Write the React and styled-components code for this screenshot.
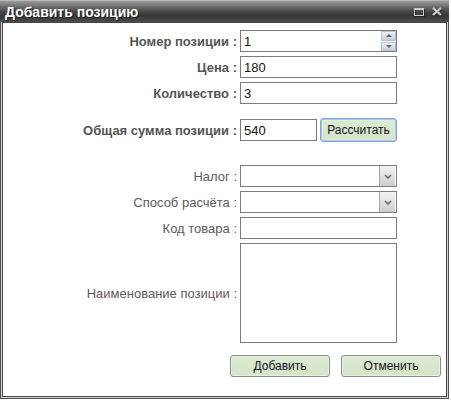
import React from "react";
import styled, { createGlobalStyle } from "styled-components";

const Global = createGlobalStyle`
  html, body { margin: 0; padding: 0; background: #ffffff; }
  * { box-sizing: border-box; }
`;

const Window = styled.div`
  width: 449px;
  height: 399px;
  display: flex;
  flex-direction: column;
  background: #d4d4d4;
  border: 1px solid #4f4f4f;
  border-top: none;
  font-family: "Liberation Sans", Arial, sans-serif;
`;

const TitleBar = styled.div`
  height: 22px;
  margin: 0 -1px;
  display: flex;
  align-items: center;
  justify-content: space-between;
  padding: 0 5px 0 5px;
  border-top: 1px solid #b8b8b8;
  background: linear-gradient(
    to bottom,
    #999999 0%,
    #727272 25%,
    #474747 50%,
    #363636 70%,
    #4c4c4c 100%
  );
`;

const Title = styled.div`
  color: #ffffff;
  font-weight: bold;
  font-size: 14px;
  text-shadow: 1px 1px 0 #1e1e1e;
  margin-top: 1px;
`;

const Controls = styled.div`
  display: flex;
  align-items: center;
  gap: 7px;
  padding-right: 1px;
  margin-top: 1px;
`;

const Frame = styled.div`
  flex: 1;
  display: flex;
  padding: 0 1px 1px 1px;
`;

const Body = styled.div`
  flex: 1;
  background: #ffffff;
  border: 1px solid #474747;
  display: flex;
  flex-direction: column;
  padding-top: 7px;
`;

const Row = styled.div`
  display: grid;
  grid-template-columns: 234px 157px;
  column-gap: 3px;
  align-items: center;
  margin-top: ${(p) => p.$mt || 0}px;
`;

const Label = styled.div`
  text-align: right;
  font-size: 13px;
  font-weight: ${(p) => (p.$bold ? "bold" : "normal")};
  color: ${(p) => (p.$bold ? "#545454" : "#5e5956")};
  white-space: nowrap;
`;

const TextInput = styled.div`
  height: 22px;
  width: ${(p) => (p.$w ? `${p.$w}px` : "100%")};
  border: 1px solid #7c7c7c;
  background: #fff;
  font-size: 13px;
  color: #111;
  display: flex;
  align-items: center;
  padding: 0 3px;
`;

const NumberBox = styled.div`
  height: 22px;
  border: 1px solid #7c7c7c;
  background: #fff;
  display: flex;
`;

const NumberValue = styled.div`
  flex: 1;
  font-size: 13px;
  color: #111;
  display: flex;
  align-items: center;
  padding: 0 3px;
`;

const Spinner = styled.div`
  width: 15px;
  display: flex;
  flex-direction: column;
  gap: 1px;
`;

const SpinButton = styled.div`
  flex: 1;
  display: flex;
  align-items: center;
  justify-content: center;
  border: 1px solid #b8c1cf;
  background: linear-gradient(to bottom, #eef2f8 0%, #d8dfea 55%, #c6cfdd 100%);
`;

const SelectBox = styled.div`
  height: 22px;
  border: 1px solid #7c7c7c;
  background: #fff;
  display: flex;
  justify-content: flex-end;
`;

const DropButton = styled.div`
  width: 16px;
  margin-right: 1px;
  display: flex;
  align-items: center;
  justify-content: center;
  border-left: 1px solid #a8a8a8;
  background: linear-gradient(to bottom, #f3f3f3 0%, #dedede 55%, #cdcdcd 100%);
`;

const TextArea = styled.div`
  height: 100px;
  border: 1px solid #7c7c7c;
  background: #fff;
`;

const Inline = styled.div`
  display: flex;
  align-items: center;
  gap: 3px;
`;

const Button = styled.button`
  width: ${(p) => p.$w}px;
  height: ${(p) => p.$h}px;
  padding: 0;
  font-family: "Liberation Sans", Arial, sans-serif;
  font-size: 12px;
  color: #141424;
  background: linear-gradient(to bottom, #dcead2 0%, #d4e5c8 100%);
  border: 1px solid ${(p) => (p.$focus ? "#7ea6d8" : "#8c8c8c")};
  border-radius: 3px;
  box-shadow: ${(p) =>
    p.$focus
      ? "inset 0 0 0 1px #a9c7ec, inset 0 0 0 2px #e5eedc"
      : "inset 0 0 0 1px #e9f1df"};
  cursor: default;
`;

const Actions = styled.div`
  display: flex;
  justify-content: flex-end;
  gap: 11px;
  padding-right: 5px;
  margin-top: 12px;
`;

const TitleIcon = ({ kind }) =>
  kind === "max" ? (
    <svg width="11" height="9" viewBox="0 0 11 9">
      <rect x="1.5" y="1.5" width="9" height="7" fill="none" stroke="#1a1a1a" strokeWidth="1" opacity="0.6" />
      <rect x="0.5" y="0.5" width="9" height="7" fill="none" stroke="#cacaca" strokeWidth="1" />
      <line x1="0" y1="1.5" x2="10" y2="1.5" stroke="#cacaca" strokeWidth="1" />
    </svg>
  ) : (
    <svg width="11" height="10" viewBox="0 0 11 10">
      <path d="M2 2 L10 9 M10 2 L2 9" stroke="#1a1a1a" strokeWidth="2.2" opacity="0.6" />
      <path d="M1 1 L9 8 M9 1 L1 8" stroke="#cacaca" strokeWidth="2.2" />
    </svg>
  );

const Arrow = ({ up }) => (
  <svg width="6" height="3" viewBox="0 0 6 3">
    <path d={up ? "M0 3 L3 0 L6 3 Z" : "M0 0 L3 3 L6 0 Z"} fill="#56627a" />
  </svg>
);

const Chevron = () => (
  <svg width="8" height="5" viewBox="0 0 8 5">
    <path d="M1 1 L4 4 L7 1" fill="none" stroke="#6a6a6a" strokeWidth="1.6" />
  </svg>
);

export default function App() {
  return (
    <>
      <Global />
      <Window>
        <TitleBar>
          <Title>Добавить позицию</Title>
          <Controls>
            <TitleIcon kind="max" />
            <TitleIcon kind="close" />
          </Controls>
        </TitleBar>
        <Frame>
          <Body>
            <Row>
              <Label $bold>Номер позиции :</Label>
              <NumberBox>
                <NumberValue>1</NumberValue>
                <Spinner>
                  <SpinButton>
                    <Arrow up />
                  </SpinButton>
                  <SpinButton>
                    <Arrow />
                  </SpinButton>
                </Spinner>
              </NumberBox>
            </Row>
            <Row $mt={4}>
              <Label $bold>Цена :</Label>
              <TextInput>180</TextInput>
            </Row>
            <Row $mt={4}>
              <Label $bold>Количество :</Label>
              <TextInput>3</TextInput>
            </Row>
            <Row $mt={14}>
              <Label $bold>Общая сумма позиции :</Label>
              <Inline>
                <TextInput $w={77}>540</TextInput>
                <Button $w={77} $h={24} $focus>
                  Рассчитать
                </Button>
              </Inline>
            </Row>
            <Row $mt={23}>
              <Label>Налог :</Label>
              <SelectBox>
                <DropButton>
                  <Chevron />
                </DropButton>
              </SelectBox>
            </Row>
            <Row $mt={4}>
              <Label>Способ расчёта :</Label>
              <SelectBox>
                <DropButton>
                  <Chevron />
                </DropButton>
              </SelectBox>
            </Row>
            <Row $mt={4}>
              <Label>Код товара :</Label>
              <TextInput />
            </Row>
            <Row $mt={4}>
              <Label>Наименование позиции :</Label>
              <TextArea />
            </Row>
            <Actions>
              <Button $w={100} $h={22}>
                Добавить
              </Button>
              <Button $w={100} $h={22}>
                Отменить
              </Button>
            </Actions>
          </Body>
        </Frame>
      </Window>
    </>
  );
}
